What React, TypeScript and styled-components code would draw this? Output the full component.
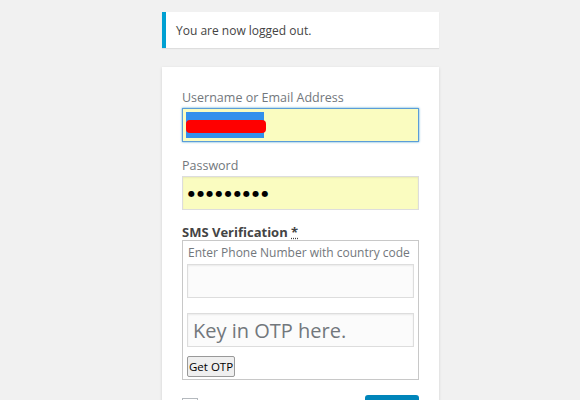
import React from "react";
import styled, { createGlobalStyle } from "styled-components";

const GlobalStyle = createGlobalStyle`
  html, body {
    margin: 0;
    padding: 0;
    background: #f1f1f1;
    height: 100%;
    overflow: hidden;
  }
  body {
    font-family: "Open Sans", "Noto Sans", sans-serif;
    color: #444;
  }
`;

const Page = styled.div`
  width: 277px;
  margin-left: 162px;
  padding-top: 12px;
`;

const Notice = styled.div`
  background: #fff;
  border-left: 4px solid #00a0d2;
  box-shadow: 0 1px 1px rgba(0, 0, 0, 0.08);
  padding: 0 10px;
  height: 36px;
  display: flex;
  align-items: center;
  font-size: 12px;
  color: #444;
`;

const Card = styled.form`
  margin-top: 19px;
  background: #fff;
  box-shadow: 0 1px 3px rgba(0, 0, 0, 0.13);
  padding: 22px 20px 40px;
`;

const Label = styled.label`
  display: block;
  font-size: 12.5px;
  color: #72777c;
  line-height: 18px;
  margin-bottom: 1px;
`;

const Field = styled.div<{ $focused?: boolean }>`
  height: 34px;
  box-sizing: border-box;
  background: #fafcc0;
  border: 1px solid ${(p) => (p.$focused ? "#5b9dd9" : "#ddd")};
  box-shadow: ${(p) =>
    p.$focused ? "0 0 2px rgba(30,140,190,.8)" : "inset 0 1px 2px rgba(0,0,0,.07)"};
  margin-bottom: 15px;
  display: flex;
  align-items: center;
  padding: 0 3px;
`;

const Selection = styled.span`
  width: 78px;
  height: 26px;
  background: #3390ec;
  position: relative;
  display: block;
`;

const Scribble = styled.span`
  position: absolute;
  left: 0;
  top: 8px;
  width: 80px;
  height: 13px;
  border-radius: 4px;
  background: #ff0000;
`;

const Dots = styled.span`
  font-size: 8px;
  letter-spacing: 2.2px;
  color: #000;
  font-family: "DejaVu Sans", sans-serif;
  padding-left: 2px;
`;

const SmsLabel = styled.div`
  font-size: 13px;
  font-weight: 700;
  color: #444;
  line-height: 15px;
  abbr {
    text-decoration: underline dotted;
  }
`;

const SmsBox = styled.div`
  border: 1px solid #c8c8c8;
  padding: 4px;
  height: 140px;
  box-sizing: border-box;
`;

const Hint = styled.div`
  font-size: 12px;
  color: #72777c;
  line-height: 16px;
  padding-left: 1px;
  margin-bottom: 3px;
`;

const TextBox = styled.div<{ $gap?: number }>`
  height: 34px;
  box-sizing: border-box;
  border: 1px solid #ddd;
  background: #fbfbfb;
  box-shadow: inset 0 1px 2px rgba(0, 0, 0, 0.07);
  margin-bottom: ${(p) => p.$gap ?? 0}px;
  display: flex;
  align-items: center;
  padding: 0 5px;
  font-size: 20px;
  color: #72777c;
`;

const Button = styled.button`
  font-family: "Open Sans", "Noto Sans", sans-serif;
  font-size: 11.5px;
  color: #000;
  background: #efefef;
  border: 1px solid #999;
  border-radius: 2px;
  height: 21px;
  padding: 0 1px;
  display: block;
`;

const Bottom = styled.div`
  display: flex;
  justify-content: space-between;
  margin-top: 15px;
`;

const Check = styled.span`
  width: 14px;
  height: 14px;
  border: 1px solid #b4b9be;
  background: #fff;
  margin-top: 3px;
`;

const Submit = styled.span`
  width: 54px;
  height: 30px;
  border-radius: 3px;
  background: #0085ba;
`;

export default function App() {
  return (
    <>
      <GlobalStyle />
      <Page>
        <Notice>You are now logged out.</Notice>
        <Card>
          <Label>Username or Email Address</Label>
          <Field $focused>
            <Selection>
              <Scribble />
            </Selection>
          </Field>
          <Label>Password</Label>
          <Field>
            <Dots>●●●●●●●●●</Dots>
          </Field>
          <SmsLabel>
            SMS Verification <abbr>*</abbr>
          </SmsLabel>
          <SmsBox>
            <Hint>Enter Phone Number with country code</Hint>
            <TextBox $gap={15} />
            <TextBox $gap={9}>Key in OTP here.</TextBox>
            <Button type="button">Get OTP</Button>
          </SmsBox>
          <Bottom>
            <Check />
            <Submit />
          </Bottom>
        </Card>
      </Page>
    </>
  );
}
